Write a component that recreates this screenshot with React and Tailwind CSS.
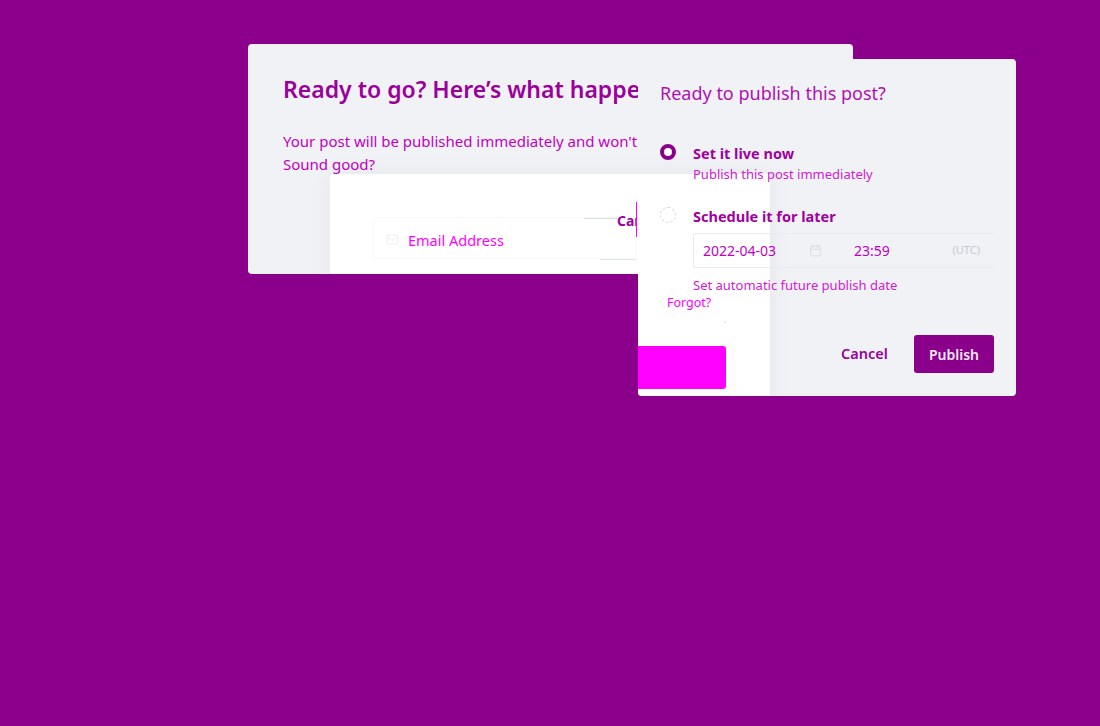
import { Mail, Calendar } from 'lucide-react';

const font = { fontFamily: '"Noto Sans", "Open Sans", sans-serif' };

// the sign-in card that peeks through both dialogs
function LoginCard({ className }) {
  return (
    <div className={`absolute w-[440px] h-[240px] bg-white rounded-tl shadow-[0_0_24px_rgba(0,0,0,0.05)] ${className}`}>
      <div className="absolute left-[43px] top-[43px] w-[264px] h-[42px] rounded border border-[#f8f8fa] flex items-center">
        <Mail className="ml-[12px] mt-[3px] w-[13px] h-[13px] text-[#e4e4ea]" strokeWidth={1.2} />
        <span className="ml-[9px] mt-[5px] text-[14.5px] text-[#ff00ff]">Email Address</span>
      </div>
      <div className="absolute left-[254px] top-[44px] w-[36px] h-px bg-[#d6e1e8]" />
      <div className="absolute left-[270px] top-[85px] w-[37px] h-px bg-[#e1e9ef]" />
      <div className="absolute left-[287px] top-[34px] w-[20px] h-[24px] overflow-hidden">
        <span className="text-[14px] leading-[22px] font-bold text-[#a000a0] whitespace-nowrap">Cancel</span>
      </div>
      <div className="absolute left-[306px] top-[28px] w-px h-[35px] bg-[#ff00ff]" />
      <span className="absolute left-[337px] top-[120px] text-[12.5px] leading-[18px] text-[#ff00ff]">Forgot?</span>
      <div className="absolute left-[394px] top-[147px] w-[2px] h-[2px] bg-[#e6e6ea]" />
      <div className="absolute left-[43px] top-[172px] w-[353px] h-[43px] rounded-[3px] bg-[#ff00ff]" />
    </div>
  );
}

export default function App() {
  return (
    <div className="relative w-[1100px] h-[726px] bg-[#8b008b] overflow-hidden" style={font}>
      {/* back dialog */}
      <div className="absolute left-[248px] top-[44px] w-[605px] h-[230px] bg-[#f1f2f6] rounded overflow-hidden">
        <div className="px-[35px] pt-[28px]">
          <h1 className="text-[23px] leading-[34px] font-semibold text-[#9a009a] whitespace-nowrap">
            Ready to go? Here’s what happens next
          </h1>
          <p className="mt-[24px] text-[15px] leading-[23px] text-[#c000c0] whitespace-nowrap">
            Your post will be published immediately and won't be scheduled.
            <br />
            Sound good?
          </p>
        </div>
        <LoginCard className="left-[82px] top-[130px]" />
      </div>

      {/* publish dialog */}
      <div className="absolute left-[638px] top-[59px] w-[378px] h-[337px] bg-[#f1f2f6] rounded overflow-hidden">
        <LoginCard className="left-[-308px] top-[115px]" />
        <div className="relative flex flex-col h-full px-[22px] pt-[22px] pb-[23px]">
          <h2 className="text-[18px] leading-[24px] text-[#b010b0]">Ready to publish this post?</h2>

          <div className="mt-[37px] flex gap-[17px]">
            <div className="mt-[2px] w-[16px] h-[16px] rounded-full border-[4px] border-[#8b008b] bg-white shrink-0" />
            <div>
              <div className="text-[14.5px] leading-[22px] font-bold text-[#a000a0]">Set it live now</div>
              <div className="text-[13px] leading-[20px] text-[#d020d0]">Publish this post immediately</div>
            </div>
          </div>

          <div className="mt-[21px] flex gap-[17px]">
            <div className="mt-[2px] w-[16px] h-[16px] rounded-full border border-dashed border-[#d8d8de] shrink-0" />
            <div className="flex-1">
              <div className="text-[14.5px] leading-[22px] font-bold text-[#a000a0]">Schedule it for later</div>
              <div className="mt-[6px] h-[35px] flex items-center border border-r-0 border-[#ebebef] rounded-l-[2px]">
                <span className="ml-[9px] w-[96px] text-[14px] text-[#c000c0]">2022-04-03</span>
                <Calendar className="ml-[10px] w-[13px] h-[13px] text-[#d4d4da]" strokeWidth={1.2} />
                <span className="ml-[32px] text-[14px] text-[#c000c0]">23:59</span>
                <span className="ml-auto mr-[14px] text-[11px] text-[#c8c8d0]">(UTC)</span>
              </div>
              <div className="mt-[7px] text-[13px] leading-[20px] text-[#d020d0]">Set automatic future publish date</div>
            </div>
          </div>

          <div className="mt-auto flex items-center justify-end gap-[26px]">
            <button className="text-[14.5px] font-semibold text-[#9a009a]">Cancel</button>
            <button className="h-[38px] px-[15px] rounded-[3px] bg-[#8b008b] text-[14px] font-semibold text-[#f6e8f6]">
              Publish
            </button>
          </div>
        </div>
      </div>
    </div>
  );
}
